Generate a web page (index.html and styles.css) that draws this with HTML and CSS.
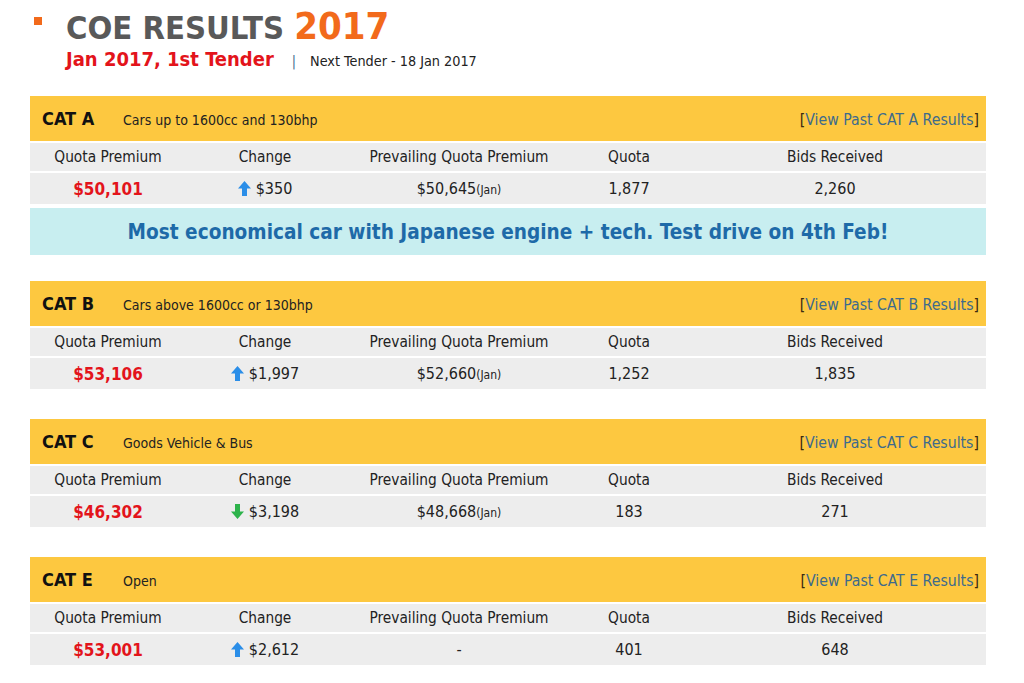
FILE: index.html
```html
<!DOCTYPE html>
<html>
<head>
<meta charset="utf-8">
<link rel="stylesheet" href="styles.css">
</head>
<body>
<div class="page">
  <header class="top">
    <div class="title-row">
      <span class="bullet"></span>
      <h1 class="title">COE RESULTS <span class="year">2017</span></h1>
    </div>
    <div class="sub-row">
      <span class="tender">Jan 2017, 1st Tender</span>
      <span class="sep">|</span>
      <span class="next">Next Tender - 18 Jan 2017</span>
    </div>
  </header>

  <section class="cat with-ad">
    <div class="cat-head">
      <span class="cat-name">CAT A</span>
      <span class="cat-desc">Cars up to 1600cc and 130bhp</span>
      <span class="cat-link"><span class="br">[</span>View Past CAT A Results<span class="br">]</span></span>
    </div>
    <div class="row labels">
      <div>Quota Premium</div><div>Change</div><div>Prevailing Quota Premium</div><div>Quota</div><div>Bids Received</div>
    </div>
    <div class="row data">
      <div class="qp">$50,101</div>
      <div class="chg"><svg class="arrow up" viewBox="0 0 13 15"><path d="M6.5 0 L13 7.5 H9 V15 H4 V7.5 H0 Z"/></svg>$350</div>
      <div>$50,645<span class="mon">(Jan)</span></div>
      <div>1,877</div>
      <div>2,260</div>
    </div>
    <div class="ad">Most economical car with Japanese engine + tech. Test drive on 4th Feb!</div>
  </section>

  <section class="cat">
    <div class="cat-head">
      <span class="cat-name">CAT B</span>
      <span class="cat-desc">Cars above 1600cc or 130bhp</span>
      <span class="cat-link"><span class="br">[</span>View Past CAT B Results<span class="br">]</span></span>
    </div>
    <div class="row labels">
      <div>Quota Premium</div><div>Change</div><div>Prevailing Quota Premium</div><div>Quota</div><div>Bids Received</div>
    </div>
    <div class="row data">
      <div class="qp">$53,106</div>
      <div class="chg"><svg class="arrow up" viewBox="0 0 13 15"><path d="M6.5 0 L13 7.5 H9 V15 H4 V7.5 H0 Z"/></svg>$1,997</div>
      <div>$52,660<span class="mon">(Jan)</span></div>
      <div>1,252</div>
      <div>1,835</div>
    </div>
  </section>

  <section class="cat">
    <div class="cat-head">
      <span class="cat-name">CAT C</span>
      <span class="cat-desc">Goods Vehicle &amp; Bus</span>
      <span class="cat-link"><span class="br">[</span>View Past CAT C Results<span class="br">]</span></span>
    </div>
    <div class="row labels">
      <div>Quota Premium</div><div>Change</div><div>Prevailing Quota Premium</div><div>Quota</div><div>Bids Received</div>
    </div>
    <div class="row data">
      <div class="qp">$46,302</div>
      <div class="chg"><svg class="arrow down" viewBox="0 0 13 15"><path d="M6.5 15 L13 7.5 H9 V0 H4 V7.5 H0 Z"/></svg>$3,198</div>
      <div>$48,668<span class="mon">(Jan)</span></div>
      <div>183</div>
      <div>271</div>
    </div>
  </section>

  <section class="cat">
    <div class="cat-head">
      <span class="cat-name">CAT E</span>
      <span class="cat-desc">Open</span>
      <span class="cat-link"><span class="br">[</span>View Past CAT E Results<span class="br">]</span></span>
    </div>
    <div class="row labels">
      <div>Quota Premium</div><div>Change</div><div>Prevailing Quota Premium</div><div>Quota</div><div>Bids Received</div>
    </div>
    <div class="row data">
      <div class="qp">$53,001</div>
      <div class="chg"><svg class="arrow up" viewBox="0 0 13 15"><path d="M6.5 0 L13 7.5 H9 V15 H4 V7.5 H0 Z"/></svg>$2,612</div>
      <div>-</div>
      <div>401</div>
      <div>648</div>
    </div>
  </section>
</div>
</body>
</html>
```

FILE: styles.css
```css
html, body {
  margin: 0;
  padding: 0;
  background: #ffffff;
}

body {
  font-family: "DejaVu Sans Condensed", "DejaVu Sans", "Liberation Sans", sans-serif;
  color: #222;
}

.page {
  width: 956px;
  padding: 6px 0 0 30px;
}

.top {
  padding-left: 4px;
  margin-bottom: 25px;
}

.title-row {
  display: flex;
  align-items: flex-start;
}

.bullet {
  width: 8px;
  height: 8px;
  background: #f26a1b;
  margin-top: 11px;
  margin-right: 24px;
}

.title {
  margin: 0;
  font-size: 32.5px;
  line-height: 40px;
  font-weight: bold;
  color: #595959;
  letter-spacing: 0;
}

.year {
  color: #f26a1b;
  font-size: 38px;
}

.sub-row {
  display: flex;
  align-items: baseline;
  padding-left: 32px;
  margin-top: -1px;
}

.tender {
  font-weight: bold;
  font-size: 20px;
  color: #e3141b;
}

.sep {
  font-size: 14px;
  color: #3d6b8c;
  margin: 0 14px 0 18px;
}

.next {
  font-size: 14.3px;
  color: #222;
}

.cat {
  margin-bottom: 30px;
}

.cat.with-ad {
  margin-bottom: 26px;
}

.cat-head {
  display: flex;
  align-items: baseline;
  height: 45px;
  box-sizing: border-box;
  padding: 12px 7px 0 12px;
  background: #fdc840;
}

.cat-name {
  font-weight: bold;
  font-size: 18px;
  color: #111;
  width: 81px;
}

.cat-desc {
  font-size: 14px;
  color: #222;
}

.cat-link {
  margin-left: auto;
  font-size: 15.7px;
  color: #3d6b8c;
}

.cat-link .br {
  color: #3b2a10;
}

.row {
  display: grid;
  grid-template-columns: 156px 158px 230px 110px 302px;
  margin-top: 2px;
  background: #ededed;
  color: #222;
  text-align: center;
  align-items: center;
}

.labels {
  height: 28px;
  font-size: 15.3px;
}

.data {
  height: 31px;
  font-size: 16px;
}

.qp {
  color: #e3141b;
  font-weight: bold;
  font-size: 17px;
}

.chg {
  display: flex;
  justify-content: center;
  align-items: center;
  gap: 5px;
}

.arrow {
  width: 13px;
  height: 15px;
}

.arrow.up {
  fill: #2b8ee8;
}

.arrow.down {
  fill: #2db34b;
}

.mon {
  font-size: 12px;
}

.ad {
  margin-top: 4px;
  height: 47px;
  display: flex;
  align-items: center;
  justify-content: center;
  background: #c8eef0;
  color: #1e6aa8;
  font-weight: bold;
  font-size: 20.6px;
}
```
